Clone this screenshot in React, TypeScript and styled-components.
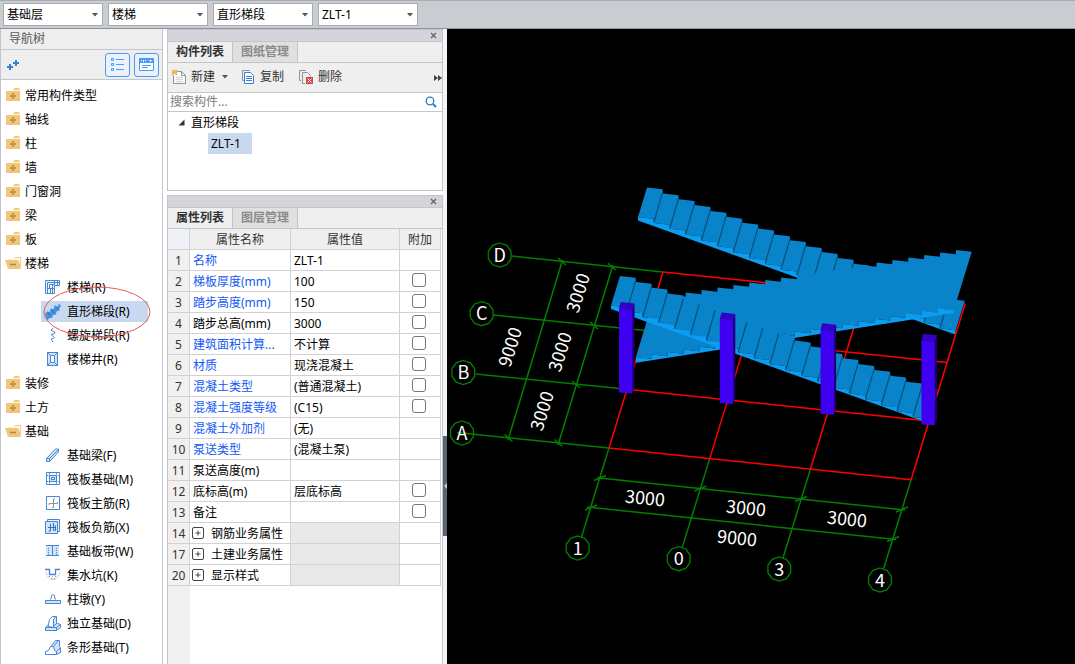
import React from "react";
import styled, { createGlobalStyle, css } from "styled-components";

const GlobalStyle = createGlobalStyle`
  *, *::before, *::after { box-sizing: border-box; }
  body {
    margin: 0;
    background: #fff;
    color: #000;
    font-family: "Noto Sans", "Noto Sans CJK SC", sans-serif;
    font-size: 12px;
    line-height: 20px;
  }
  button, input, select { font: inherit; color: inherit; }
  button { border: 0; padding: 0; background: none; }
  ul { list-style: none; margin: 0; padding: 0; }
  svg { display: block; flex: none; }
`;

const line = "#c3c5cb";

/* ---------- shell ---------- */

const Page = styled.div`
  min-height: 100vh;
  display: flex;
  flex-direction: column;
`;

const TopBar = styled.header`
  display: flex;
  gap: 5px;
  height: 29px;
  padding: 2px 3px 0;
  background: #c9ccd1;
  border-top: 1px solid #a9acb2;
  border-bottom: 1px solid #8f929a;
`;

const Combo = styled.div`
  position: relative;
  width: 100px;
  height: 23px;
`;

const ComboSelect = styled.select`
  appearance: none;
  width: 100%;
  height: 100%;
  padding: 0 16px 0 3px;
  border: 1px solid #a8abb2;
  border-radius: 0;
  background: #fff;
  outline: none;
`;

const ComboArrow = styled.svg`
  position: absolute;
  right: 5px;
  top: 10px;
  pointer-events: none;
`;

const Body = styled.div`
  flex: 1;
  display: flex;
`;

/* ---------- navigation tree ---------- */

const Nav = styled.nav`
  width: 163px;
  flex: none;
  border: solid ${line};
  border-width: 0 1px;
`;

const NavTitle = styled.h2`
  margin: 0;
  height: 21px;
  padding-left: 8px;
  font-size: 12px;
  font-weight: 400;
  line-height: 20px;
  color: #5a5a5a;
  background: #eee;
  border-bottom: 1px solid ${line};
`;

const NavTools = styled.div`
  display: flex;
  align-items: center;
  gap: 4px;
  height: 30px;
  padding: 0 3px 0 5px;
  background: #eee;
  border-bottom: 1px solid ${line};
`;

const AddButton = styled.button`
  margin-right: auto;
`;

const ToggleButton = styled.button`
  display: grid;
  place-items: center;
  width: 25px;
  height: 24px;
  margin-top: 1px;
  border: 1px solid #4c9cf5;
  border-radius: 3px;
  background: #e9f2fd;
`;

const TreeList = styled.ul`
  && { padding: 4px 0; }
`;

const TreeRow = styled.li`
  height: 24px;
  display: flex;
  align-items: center;
`;

const GroupButton = styled.button`
  display: flex;
  align-items: center;
  gap: 3px;
  padding-left: 4px;
`;

const LeafItem = styled.div`
  position: relative;
  margin: 0 0 1px 40px;
`;

const LeafButton = styled.button<{ $selected?: boolean }>`
  display: flex;
  align-items: center;
  gap: 6px;
  min-width: 107px;
  height: 21px;
  padding: 1px 0 0 4px;
  background: ${(p) => (p.$selected ? "#c8d9ef" : "transparent")};
`;

const Marker = styled.svg`
  position: absolute;
  left: 2px;
  top: -16px;
  pointer-events: none;
  z-index: 1;
`;

/* ---------- docked panels ---------- */

const Dock = styled.div`
  width: 276px;
  flex: none;
  margin-left: 4px;
  display: flex;
  flex-direction: column;
  gap: 4px;
`;

const Panel = styled.section<{ $grow?: boolean }>`
  display: flex;
  flex-direction: column;
  border: 1px solid ${line};
  ${(p) => p.$grow && css`
    flex: 1;
    border-bottom: 0;
  `}
`;

const PanelBar = styled.div`
  display: flex;
  justify-content: flex-end;
  align-items: center;
  height: 11px;
  padding-right: 4px;
  background: #d4d5da;
`;

const Tabs = styled.div`
  display: flex;
  height: 22px;
  background: #efefef;
  border: solid ${line};
  border-width: 1px 0;
`;

const Tab = styled.button<{ $active?: boolean }>`
  width: 65px;
  font-weight: 700;
  color: ${(p) => (p.$active ? "#333" : "#8a8a8a")};
  background: ${(p) => (p.$active ? "#efefef" : "#e0e0e1")};
  border-right: 1px solid ${line};
`;

const Toolbar = styled.div`
  display: flex;
  align-items: center;
  gap: 14px;
  height: 30px;
  padding-left: 3px;
  background: #efefef;
  border-bottom: 1px solid ${line};
`;

const ToolButton = styled.button`
  display: flex;
  align-items: center;
  gap: 4px;
  margin-bottom: 1px;
  color: #333;
`;

const ToolCaret = styled.svg`
  margin-left: 3px;
`;

const MoreButton = styled.button`
  margin-left: auto;
`;

const SearchBox = styled.label`
  display: flex;
  align-items: center;
  height: 19px;
  padding-right: 5px;
  border-bottom: 1px solid ${line};
`;

const SearchInput = styled.input`
  flex: 1;
  min-width: 0;
  height: 18px;
  padding: 0 2px;
  border: 0;
  outline: none;
  background: transparent;
  &::placeholder { color: #7c7c7c; opacity: 1; }
`;

const ComponentTree = styled.div`
  display: flex;
  flex-direction: column;
  align-items: flex-start;
  height: 78px;
`;

const Branch = styled.button`
  display: flex;
  align-items: center;
  gap: 6px;
  height: 21px;
  padding-left: 10px;
`;

const Leaf = styled.button`
  height: 21px;
  width: 44px;
  margin-left: 40px;
  padding-left: 3px;
  text-align: left;
  background: #c8d9ef;
`;

const Table = styled.table`
  width: 273px;
  table-layout: fixed;
  border-collapse: separate;
  border-spacing: 0;
`;

const cell = css`
  height: 21px;
  padding: 2px 0 0;
  border: solid #d2d2d4;
  border-width: 0 1px 1px 0;
  font-weight: 400;
  line-height: 18px;
  white-space: nowrap;
`;

const Head = styled.th`
  ${cell}
  color: #333;
  background: #efefef;
  &:first-child { background: #eef2f8; }
`;

const Index = styled.th`
  ${cell}
  color: #333;
  background: #f0f0f0;
`;

const NameCell = styled.td<{ $blue?: boolean }>`
  ${cell}
  padding-left: 3px;
  color: ${(p) => (p.$blue ? "#1459f5" : "#000")};
`;

const ValueCell = styled.td<{ $muted?: boolean }>`
  ${cell}
  padding-left: 3px;
  background: ${(p) => (p.$muted ? "#e9e9e9" : "#fff")};
`;

const CheckCell = styled.td`
  ${cell}
`;

const Check = styled.input`
  appearance: none;
  display: block;
  width: 14px;
  height: 14px;
  margin: 0 0 4px 12px;
  border: 1px solid #777;
  border-radius: 3px;
  background: #fff;
`;

const ExpandRow = styled.button`
  display: flex;
  align-items: center;
  gap: 7px;
  height: 18px;
  margin-left: -1px;
`;

const Gutter = styled.div`
  flex: 1;
  width: 22px;
  background: #f0f0f0;
`;

const Splitter = styled.div`
  width: 4px;
  flex: none;
  background: #f4f5f7;
`;

const SplitHandle = styled.button`
  display: grid;
  place-items: center;
  width: 4px;
  height: 100px;
  margin-top: 407px;
  background: #5a6472;
`;

const Viewport = styled.main`
  flex: 1;
  min-width: 0;
  background: #000;
  svg { width: 100%; }
`;

/* ---------- icons ---------- */

const FolderIcon = ({ open }: { open?: boolean }) => (
  <svg width="17" height="16" viewBox="0 1 17 16">
    {open ? (
      <>
        <path d="M3 4h6l1-2h6v10h-2z" fill="#efcb84" />
        <path d="M4 4h5l1 -1h5v7l-2-4H4z" fill="#fff6dd" />
        <path d="M0 5h13l3 9H3z" fill="#efc67c" />
        <path d="M5 9.500h6" stroke="#b48a3a" strokeWidth="1.600" />
      </>
    ) : (
      <>
        <path d="M8 3l1-2h5l1 2v1H8z" fill="#efcb84" />
        <path d="M1 4h14v10H1z" fill="#efc67c" />
        <path d="M8 3.500h7" stroke="#fff8e6" />
        <path d="M8 6v6M5 9h6" stroke="#c9973c" strokeWidth="2" />
      </>
    )}
  </svg>
);

const B = "#4686d6";
const L = "#d3e3f6";

const leafIcons: Record<string, React.ReactNode> = {
  stair: (
    <g stroke={B} fill="none">
      <path d="M.5 1.500h14v5h-5v8h-9z" fill="#eef5fc" />
      <path d="M2.500 14v-10.500h12M2.500 9.500h7M5.500 9.500v5M7.500 5.500v9M4.500 5.500h5M4.500 5.500v4M9.500 1.500v5M12.500 1.500v5" />
    </g>
  ),
  flight: (
    <g>
      <path d="M0 11l2.500-3 1.500 2 2-5 2 2 2-5 2 2 2.500-3.500 1.500 2.500-1.500 2 0 2.500-3 1-.5 3-3 .5-1 3-2.500 0-2.500 2.500z" fill="#3f93ea" />
      <path d="M3 9l2 4M7 6l2 4M11 3.500l2 3" stroke="#2270c4" />
    </g>
  ),
  spiral: <path d="M8.500 1l-2.500 2 4 2.500-1 1.500-3 .5 3.500 3 -1 1-2.500 .5 2 3" stroke={B} fill="none" />,
  well: (
    <g stroke={B} fill={L}>
      <path d="M2.500 1.500h10v13h-10z" />
      <path d="M5.500 4.500h4v7h-4z" fill="#fff" />
      <path d="M2.500 1.500l3 3M12.500 1.500l-3 3M2.500 14.500l3-3M12.500 14.500l-3-3" />
    </g>
  ),
  beam: (
    <g stroke={B} fill={L}>
      <path d="M1.500 11.500l9-9.500 3 0 0 3-9 9.500h-3z" />
      <path d="M1.500 11.500h3v3M4.500 11.500l9-9" />
    </g>
  ),
  raft: (
    <g stroke={B} fill="none">
      <path d="M1.500 1.500h13v12h-13z" fill="#fff" />
      <path d="M4.500 1.500v12M11.500 1.500v12M1.500 4.500h13M1.500 10.500h13" strokeDasharray="2 1" />
      <path d="M6.500 6.500h3v2h-3zM4.500 4.500h7v6h-7z" fill={L} />
      <path d="M6.500 6.500h3v2h-3z" fill="#fff" />
    </g>
  ),
  mainBar: (
    <g fill="none">
      <path d="M1.500 1.500h13v13h-13z" stroke={B} fill="#fff" />
      <path d="M8.500 12.500v-8.500h1.500M4 8.500h8.500v-1.500M4 8.500v1.500M8.500 12.500h-1.500" stroke="#8795a5" />
    </g>
  ),
  negBar: (
    <g stroke={B} fill="#eef5fc">
      <path d="M2.500 2.500v-2h12v12h-2" />
      <path d="M.5 2.500h12v12H.5z" fill={L} />
      <path d="M5.500 5v7h-2M8.500 4v7M3 8.500h7M10.500 6.500v5h-2" stroke="#2f72c4" fill="none" />
    </g>
  ),
  band: (
    <g stroke={B} fill="none">
      <path d="M1 3h13v10H1z" fill={L} stroke="none" />
      <path d="M1 2.500h13M1 12.500h13M7.500 3v10" />
      <path d="M3.500 5v7M11.500 5v7" strokeDasharray="1 1" />
    </g>
  ),
  pit: (
    <g fill="none">
      <path d="M0 2.500h4.500v5h6v-5H15" stroke={B} strokeWidth="1.300" />
      <path d="M1 5.500l2 4 3 3h4l3-3 2-4" stroke="#8795a5" strokeDasharray="1 1" />
      <path d="M4 9.500h8M6 11.500h4" stroke="#8fa0b2" strokeDasharray="1 2" />
    </g>
  ),
  pier: (
    <g fill={L} stroke={B}>
      <path d="M5.500 8.500v-1.500h1v-3h3v3h1v1.500" stroke="#8795a5" fill="#fff" />
      <path d="M.5 9.500h15v3H.5z" />
    </g>
  ),
  isolated: (
    <g fill={L} stroke={B}>
      <path d="M.5 12.500v3h11l4-3v-3l-3-1-9 1z" />
      <path d="M3.500 11.500v-2l1-5 3-3h4l-1 2v5l-2 3z" fill="#fff" />
      <path d="M8.500 4.500l2-3h1v7l-3 3zM.5 12.500h11l4-3M11.500 12.500v3" />
    </g>
  ),
  strip: (
    <g fill={L} stroke={B}>
      <path d="M6.500 6.500l4-5h4v6l1 1v5l-4 2z" />
      <path d="M.5 15.500v-3l3-1 2-4h3l1 4 2 1v3z" fill="#fff" />
      <path d="M8.500 7.500l5-6M11.500 12.500l4-4" />
    </g>
  ),
};

const LeafIcon = ({ name }: { name: string }) => (
  <svg width="16" height="16" viewBox="0 1 16 16" overflow="visible">{leafIcons[name]}</svg>
);

const CloseIcon = () => (
  <svg width="8" height="8" viewBox="0 0 8 8">
    <path d="M1 1l5 5M6 1L1 6" stroke="#666" strokeWidth="1.400" />
  </svg>
);

/* ---------- data ---------- */

type Node = { label: string; open?: boolean; icon?: string; selected?: boolean };

const nodes: Node[] = [
  { label: "常用构件类型" },
  { label: "轴线" },
  { label: "柱" },
  { label: "墙" },
  { label: "门窗洞" },
  { label: "梁" },
  { label: "板" },
  { label: "楼梯", open: true },
  { label: "楼梯(R)", icon: "stair" },
  { label: "直形梯段(R)", icon: "flight", selected: true },
  { label: "螺旋梯段(R)", icon: "spiral" },
  { label: "楼梯井(R)", icon: "well" },
  { label: "装修" },
  { label: "土方" },
  { label: "基础", open: true },
  { label: "基础梁(F)", icon: "beam" },
  { label: "筏板基础(M)", icon: "raft" },
  { label: "筏板主筋(R)", icon: "mainBar" },
  { label: "筏板负筋(X)", icon: "negBar" },
  { label: "基础板带(W)", icon: "band" },
  { label: "集水坑(K)", icon: "pit" },
  { label: "柱墩(Y)", icon: "pier" },
  { label: "独立基础(D)", icon: "isolated" },
  { label: "条形基础(T)", icon: "strip" },
];

type Prop = { no: number; name: string; value?: string; blue?: boolean; check?: boolean; group?: boolean };

const props: Prop[] = [
  { no: 1, name: "名称", value: "ZLT-1", blue: true },
  { no: 2, name: "梯板厚度(mm)", value: "100", blue: true, check: true },
  { no: 3, name: "踏步高度(mm)", value: "150", blue: true, check: true },
  { no: 4, name: "踏步总高(mm)", value: "3000", check: true },
  { no: 5, name: "建筑面积计算...", value: "不计算", blue: true, check: true },
  { no: 6, name: "材质", value: "现浇混凝土", blue: true, check: true },
  { no: 7, name: "混凝土类型", value: "(普通混凝土)", blue: true, check: true },
  { no: 8, name: "混凝土强度等级", value: "(C15)", blue: true, check: true },
  { no: 9, name: "混凝土外加剂", value: "(无)", blue: true },
  { no: 10, name: "泵送类型", value: "(混凝土泵)", blue: true },
  { no: 11, name: "泵送高度(m)" },
  { no: 12, name: "底标高(m)", value: "层底标高", check: true },
  { no: 13, name: "备注", check: true },
  { no: 14, name: "钢筋业务属性", group: true },
  { no: 17, name: "土建业务属性", group: true },
  { no: 20, name: "显示样式", group: true },
];

/* ---------- 3D scene ---------- */

type Pt = [number, number];
const join = (pts: Pt[]) => pts.map((p) => `${p[0].toFixed(1)},${p[1].toFixed(1)}`).join(" ");

const STEPS = 20;
const RUN = 15.9;
const FACE = "#0983c9";
const UNDER = "#0a9df2";
const EDGE = "#06507c";

/* A run of saw-tooth corners, each tread tilted slightly towards the viewer. */
const sawtooth = (x: number, y: number, rise: number): Pt[] =>
  Array.from({ length: STEPS }).flatMap((_, i): Pt[] => [
    [x + RUN * i, y + rise * i],
    [x + RUN * i + 15.6, y + rise * i + 1.8],
  ]);

const DownFlight = ({ x, y }: { x: number; y: number }) => {
  const top = sawtooth(x, y, 5.87);
  const low = sawtooth(x - 9, y + 29.5, 5.87);
  return (
    <>
      <polygon points={join([...top, ...[...low].reverse()])} fill={FACE} />
      <polygon points={join([...low, [x + 308, y + 147], [x - 9, y + 33]])} fill={UNDER} />
      {Array.from({ length: STEPS - 1 }).map((_, i) => {
        const ex = x + RUN * (i + 1);
        const ey = y + 5.87 * (i + 1);
        return <line key={i} x1={ex - 0.3} y1={ey - 1} x2={ex - 9} y2={ey + 29} stroke={EDGE} strokeWidth="1.200" />;
      })}
    </>
  );
};

const UpFlight = () => {
  const top = sawtooth(654, 297.5, -2.5);
  const low = sawtooth(636, 357, -2.55);
  return (
    <>
      <polygon points={join([...top, ...[...low].reverse()])} fill={FACE} />
      <polygon points={join([...low, [954, 313], [636, 362.7]])} fill={UNDER} />
    </>
  );
};

const Column = ({ x, y }: { x: number; y: number }) => (
  <>
    <polygon points={join([[x + 13, y + 7], [x + 15.5, y + 1.5], [x + 15.5, y + 86], [x + 13, y + 91]])} fill="#1d0078" />
    <polygon points={join([[x, y + 6.5], [x + 13.3, y + 8], [x + 13.3, y + 91.5], [x, y + 90.5]])} fill="#3f00f2" />
    <polygon points={join([[x + 1.7, y], [x + 15.5, y + 1.5], [x + 13.3, y + 8.5], [x, y + 6.5]])} fill="#3300c4" />
  </>
);

const AxisBubble = ({ x, y, label }: { x: number; y: number; label: string }) => (
  <>
    <polygon
      points={join(Array.from({ length: 10 }).map((_, i): Pt => [
        x + 12 * Math.sin((i * Math.PI) / 5),
        y - 12 * Math.cos((i * Math.PI) / 5),
      ]))}
      fill="none"
      stroke="#008000"
      strokeWidth="1.300"
    />
    <text x={x} y={y + 6.5} textAnchor="middle">{label}</text>
  </>
);

const Dimension = ({ x, y, angle, value }: { x: number; y: number; angle: number; value: string }) => (
  <text transform={`translate(${x} ${y}) rotate(${angle})`} y="6.500" textAnchor="middle">{value}</text>
);

const Scene = () => {
  const col = (k: number): Pt => [609 + 100.7 * k, 448 + 10.6 * k];
  const row = (k: number): Pt => [609 + 18 * k, 448 - 58.7 * k];
  return (
    <svg viewBox="447 29 628 635" preserveAspectRatio="xMinYMin meet" role="img" aria-label="三维视图">
      <g stroke="#ff0000" strokeWidth="1.500">
        {[0, 1, 2, 3].map((k) => {
          const [x, y] = row(k);
          return <line key={k} x1={x} y1={y} x2={x + 302} y2={y + 31.8} />;
        })}
        {[0, 1, 2].map((k) => {
          const [x, y] = col(k);
          return <line key={k} x1={x} y1={y} x2={x + 54} y2={y - 176} />;
        })}
      </g>
      <g stroke="#008000" strokeWidth="1.500">
        <line x1="457" y1="432.500" x2="609" y2="448" />
        <line x1="475.500" y1="374" x2="627" y2="389.300" />
        <line x1="493.500" y1="315" x2="645" y2="330.600" />
        <line x1="511.500" y1="256" x2="663" y2="272" />
        <line x1="562.500" y1="260" x2="508" y2="440" />
        <line x1="613" y1="265" x2="558" y2="445" />
        {[0, 1, 2, 3].map((k) => {
          const [x, y] = col(k);
          return <line key={k} x1={x} y1={y} x2={x - 27.5} y2={y + 89} />;
        })}
        <line x1="597" y1="477.700" x2="905" y2="510" />
        <line x1="587" y1="507" x2="896" y2="539.500" />
        {[[562, 261.5], [612, 266.8], [594, 325.5], [576, 384.3], [508.5, 438], [558.5, 443]].map(([x, y]) => (
          <line key={`${x}`} x1={x - 4} y1={y - 3.5} x2={x + 4} y2={y + 3.5} />
        ))}
        {[[600, 478], [700.5, 488.5], [801, 499], [902, 509.5], [591, 507.5], [893, 539]].map(([x, y]) => (
          <line key={`${x}`} x1={x - 6} y1={y + 2.5} x2={x + 6} y2={y - 2.5} />
        ))}
      </g>
      <DownFlight x={647} y={187.5} />
      <UpFlight />
      <line x1="911" y1="480" x2="965" y2="304" stroke="#ff0000" strokeWidth="1.500" />
      <DownFlight x={620} y={276} />
      {[0, 1, 2, 3].map((k) => (
        <Column key={k} x={619 + 100.8 * k} y={302 + 10.6 * k} />
      ))}
      <g fill="#fff" fontSize="18" fontFamily='"Noto Sans CJK SC", sans-serif'>
        <AxisBubble x={499.7} y={255} label="D" />
        <AxisBubble x={481.7} y={313.7} label="C" />
        <AxisBubble x={463.3} y={372.5} label="B" />
        <AxisBubble x={462} y={433} label="A" />
        <AxisBubble x={577.7} y={548} label="1" />
        <AxisBubble x={678.7} y={558.7} label="0" />
        <AxisBubble x={779.3} y={569} label="3" />
        <AxisBubble x={880} y={580} label="4" />
        <Dimension x={578} y={293} angle={-73} value="3000" />
        <Dimension x={560} y={352} angle={-73} value="3000" />
        <Dimension x={542} y={411} angle={-73} value="3000" />
        <Dimension x={510} y={347} angle={-73} value="9000" />
        <Dimension x={645} y={498} angle={6} value="3000" />
        <Dimension x={746} y={508} angle={6} value="3000" />
        <Dimension x={847} y={519} angle={6} value="3000" />
        <Dimension x={737} y={538} angle={6} value="9000" />
      </g>
    </svg>
  );
};

/* ---------- app ---------- */

const App = () => (
  <>
    <GlobalStyle />
    <Page>
      <TopBar>
        {[["楼层", "基础层"], ["类别", "楼梯"], ["类型", "直形梯段"], ["构件", "ZLT-1"]].map(([label, value]) => (
          <Combo key={label}>
            <ComboSelect aria-label={label}>
              <option>{value}</option>
            </ComboSelect>
            <ComboArrow width="6" height="4" viewBox="0 0 6 4"><path d="M0 0h6L3 3.500z" fill="#555" /></ComboArrow>
          </Combo>
        ))}
      </TopBar>
      <Body>
        <Nav>
          <NavTitle>导航树</NavTitle>
          <NavTools>
            <AddButton aria-label="添加">
              <svg width="14" height="14" viewBox="0 0 14 14">
                <path d="M4 6v6M1 9h6M10 2v6M7 5h6" stroke="#3a7fd5" strokeWidth="2" />
              </svg>
            </AddButton>
            <ToggleButton aria-label="列表">
              <svg width="13" height="14" viewBox="0 0 13 14" fill="none" stroke="#4c9cf5">
                <path d="M.5 .5h2v2h-2zM.5 5.500h2v2h-2zM.5 10.500h2v2h-2zM5 1.500h8M5 6.500h8M5 11.500h8" />
              </svg>
            </ToggleButton>
            <ToggleButton aria-label="面板">
              <svg width="15" height="14" viewBox="0 0 15 14">
                <path d="M.5 .5h14v12H.5z" fill="#fff" stroke="#4c9cf5" />
                <path d="M0 0h15v5H0z" fill="#4c9cf5" />
                <path d="M2 2h1v1H2zM4 2h1v2H4zM6 2h1v1H6zM10 2h3l-1.500 2z" fill="#fff" />
                <path d="M3 7.500h9M3 9.500h6" stroke="#4c9cf5" />
              </svg>
            </ToggleButton>
          </NavTools>
          <TreeList>
            {nodes.map((n) => (
              <TreeRow key={n.label}>
                {n.icon ? (
                  <LeafItem>
                    <LeafButton $selected={n.selected}>
                      <LeafIcon name={n.icon} />
                      {n.label}
                    </LeafButton>
                    {n.selected && (
                      <Marker width="108" height="54" viewBox="0 0 108 54">
                        <ellipse cx="54" cy="27" rx="53" ry="25" fill="none" stroke="#ee5555" />
                      </Marker>
                    )}
                  </LeafItem>
                ) : (
                  <GroupButton>
                    <FolderIcon open={n.open} />
                    {n.label}
                  </GroupButton>
                )}
              </TreeRow>
            ))}
          </TreeList>
        </Nav>

        <Dock>
          <Panel>
            <PanelBar><button aria-label="关闭"><CloseIcon /></button></PanelBar>
            <Tabs>
              <Tab $active>构件列表</Tab>
              <Tab>图纸管理</Tab>
            </Tabs>
            <Toolbar>
              <ToolButton>
                <svg width="16" height="16" viewBox="0 0 16 16">
                  <path d="M4.500 2.500h6l4 4v8h-12v-8" fill="#fafafa" stroke="#8a949e" />
                  <path d="M10.500 2.500v4h4" fill="none" stroke="#8a949e" />
                  <path d="M5 8.500h7M5 10.500h7M5 12.500h7" stroke="#cdd3d8" />
                  <path d="M0 0h6v6H0z" fill="#efefef" />
                  <path d="M1 1h1v1H1zM5 1h1v1H5zM2 2h1v1H2zM4 2h1v1H4zM3 3h1v1H3zM2 4h1v1H2zM4 4h1v1H4zM1 5h1v1H1zM5 5h1v1H5zM3 1h1v1H3zM1 3h1v1H1zM5 3h1v1H5z" fill="#f29a18" stroke="#f2a83a" strokeWidth=".3" />
                </svg>
                新建
                <ToolCaret width="6" height="4" viewBox="0 0 6 4"><path d="M0 0h6L3 3.500z" fill="#555" /></ToolCaret>
              </ToolButton>
              <ToolButton>
                <svg width="14" height="16" viewBox="1 0 14 16" fill="#fff">
                  <path d="M9 1.500H1.500v10H3" fill="none" stroke="#8a949e" />
                  <path d="M3.500 3.500h6l3 3v8h-9z" stroke="#3a7fd5" />
                  <path d="M5 7.500h6M5 9.500h6M5 11.500h6" stroke="#3a7fd5" />
                </svg>
                复制
              </ToolButton>
              <ToolButton>
                <svg width="16" height="16" viewBox="0 0 16 16" fill="none">
                  <path d="M8 1.500H1.500v10H3M7 14.500H4.500v-11h5l3 3v1" stroke="#8a949e" />
                  <path d="M8 8h7v7H8z" fill="#d9434a" />
                  <path d="M9.500 9.500l4 4M13.500 9.500l-4 4" stroke="#fff" />
                </svg>
                删除
              </ToolButton>
              <MoreButton aria-label="更多">
                <svg width="8" height="6" viewBox="0 0 8 6"><path d="M0 0l4 3-4 3zM4 0l4 3-4 3z" fill="#444" /></svg>
              </MoreButton>
            </Toolbar>
            <SearchBox>
              <SearchInput placeholder="搜索构件..." aria-label="搜索构件" />
              <svg width="12" height="12" viewBox="0 0 12 12" fill="none" stroke="#1d86c6">
                <circle cx="5" cy="5" r="3.800" strokeWidth="1.300" />
                <path d="M8 8l3 3" strokeWidth="2" />
              </svg>
            </SearchBox>
            <ComponentTree>
              <Branch>
                <svg width="7" height="7" viewBox="0 0 7 7"><path d="M6.500 .5v6h-6z" fill="#333" /></svg>
                直形梯段
              </Branch>
              <Leaf>ZLT-1</Leaf>
            </ComponentTree>
          </Panel>

          <Panel $grow>
            <PanelBar><button aria-label="关闭"><CloseIcon /></button></PanelBar>
            <Tabs>
              <Tab $active>属性列表</Tab>
              <Tab>图层管理</Tab>
            </Tabs>
            <Table>
              <colgroup>
                <col width="22" />
                <col width="101" />
                <col width="109" />
                <col width="41" />
              </colgroup>
              <thead>
                <tr>
                  <Head />
                  <Head>属性名称</Head>
                  <Head>属性值</Head>
                  <Head>附加</Head>
                </tr>
              </thead>
              <tbody>
                {props.map((p) => (
                  <tr key={p.no}>
                    <Index scope="row">{p.no}</Index>
                    <NameCell $blue={p.blue}>
                      {p.group ? (
                        <ExpandRow>
                          <svg width="12" height="14" viewBox="0 0 12 14" fill="#fff" stroke="#444">
                            <rect x=".5" y=".5" width="11" height="11" rx="1.500" />
                            <path d="M3.500 6h5M6 3.500v5" />
                          </svg>
                          {p.name}
                        </ExpandRow>
                      ) : (
                        p.name
                      )}
                    </NameCell>
                    <ValueCell $muted={p.group}>{p.value}</ValueCell>
                    <CheckCell>{p.check && <Check type="checkbox" aria-label={`${p.name} 附加`} />}</CheckCell>
                  </tr>
                ))}
              </tbody>
            </Table>
            <Gutter />
          </Panel>
        </Dock>

        <Splitter>
          <SplitHandle aria-label="折叠">
            <svg width="3" height="6" viewBox="0 0 3 6"><path d="M3 0v6L0 3z" fill="#c9ced6" /></svg>
          </SplitHandle>
        </Splitter>

        <Viewport>
          <Scene />
        </Viewport>
      </Body>
    </Page>
  </>
);

export default App;
